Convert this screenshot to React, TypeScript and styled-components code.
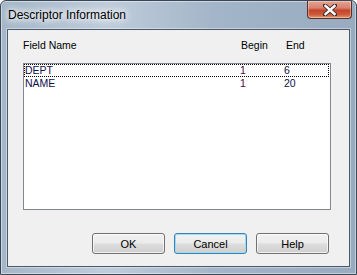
import React from 'react';
import styled, { createGlobalStyle } from 'styled-components';

const GlobalStyle = createGlobalStyle`
    html, body {
        margin: 0;
        padding: 0;
        background: #ffffff;
    }
    body {
        font-family: "Liberation Sans", Arial, sans-serif;
    }
`

const Window = styled.div`
    box-sizing: border-box;
    width: 357px;
    height: 275px;
    display: flex;
    flex-direction: column;
    border: 1px solid #3b4654;
    border-radius: 6px 6px 0 0;
    background: linear-gradient(90deg, #a4b6c8 0%, #bfcddb 30%, #a3b5c8 60%, #98abbf 100%);
    padding: 0 6px 7px 6px;
    box-shadow: inset 0 0 0 1px rgba(255,255,255,0.45);
`

const TitleBar = styled.div`
    height: 28px;
    display: flex;
    align-items: flex-start;
    flex-shrink: 0;
`

const TitleText = styled.div`
    margin-top: 7px;
    margin-left: 1px;
    font-size: 12px;
    color: #000000;
    text-shadow: 0 0 6px #ffffff, 0 0 8px #ffffff, 0 0 10px #ffffff;
`

const CloseButton = styled.div`
    margin-left: auto;
    margin-right: -2px;
    width: 45px;
    height: 18px;
    box-sizing: border-box;
    border: 1px solid #5a2e2a;
    border-top: none;
    border-radius: 0 0 4px 4px;
    background: linear-gradient(180deg, #e7a292 0%, #d7836f 40%, #c4452c 55%, #cf5a3b 80%, #e49a72 100%);
    box-shadow: inset 0 0 0 1px rgba(255,255,255,0.35);
    display: flex;
    align-items: center;
    justify-content: center;
`

const Client = styled.div`
    flex: 1;
    display: flex;
    flex-direction: column;
    border: 1px solid #4b5868;
    background: #f0f0f0;
    padding: 9px 0 0 15px;
    box-shadow: 0 0 0 1px rgba(255,255,255,0.4);
`

const HeaderRow = styled.div`
    display: flex;
    font-size: 10.5px;
    color: #000000;
    height: 13px;
    line-height: 13px;
`

const HeaderCell = styled.div<{ $w?: number }>`
    width: ${p => (p.$w ? `${p.$w}px` : 'auto')};
`

const ListBox = styled.div`
    margin-top: 11px;
    width: 308px;
    height: 147px;
    box-sizing: border-box;
    border: 1px solid #828790;
    background: #ffffff;
    padding: 0;
`

const Row = styled.div<{ $focused?: boolean }>`
    display: flex;
    height: 13px;
    line-height: 13px;
    font-size: 10.5px;
    padding-left: 1px;
    margin-right: 1px;
    outline: ${p => (p.$focused ? '1px dotted #000000' : 'none')};
    outline-offset: -1px;
`

const Cell = styled.div<{ $w?: number; $color: string }>`
    width: ${p => (p.$w ? `${p.$w}px` : 'auto')};
    color: ${p => p.$color};
`

const ButtonRow = styled.div`
    margin-top: auto;
    margin-bottom: 12px;
    margin-right: 20px;
    display: flex;
    justify-content: flex-end;
    gap: 9px;
`

const Button = styled.div<{ $default?: boolean }>`
    width: 73px;
    height: 21px;
    box-sizing: border-box;
    border: 1px solid ${p => (p.$default ? '#3c7fb1' : '#707070')};
    border-radius: 3px;
    background: linear-gradient(180deg, #f2f2f2 0%, #ebebeb 48%, #dddddd 52%, #cfcfcf 100%);
    box-shadow: inset 0 0 0 1px ${p => (p.$default ? '#9fdcf5' : 'rgba(255,255,255,0.7)')};
    font-size: 11px;
    color: #000000;
    display: flex;
    align-items: center;
    justify-content: center;
`

const fields = [
    { name: 'DEPT', begin: '1', end: '6' },
    { name: 'NAME', begin: '1', end: '20' },
]

const App = () => {
    return (
        <>
            <GlobalStyle />
            <Window>
                <TitleBar>
                    <TitleText>Descriptor Information</TitleText>
                    <CloseButton>
                        <svg width="14" height="12" viewBox="0 0 14 12">
                            <path d="M2 1.5 L12 10.5 M12 1.5 L2 10.5" stroke="#3a2a2a" strokeWidth="4.2" strokeLinecap="square" />
                            <path d="M2.5 2 L11.5 10 M11.5 2 L2.5 10" stroke="#ffffff" strokeWidth="2.4" strokeLinecap="square" />
                        </svg>
                    </CloseButton>
                </TitleBar>
                <Client>
                    <HeaderRow>
                        <HeaderCell $w={218}>Field Name</HeaderCell>
                        <HeaderCell $w={45}>Begin</HeaderCell>
                        <HeaderCell>End</HeaderCell>
                    </HeaderRow>
                    <ListBox>
                        {fields.map((f, i) => (
                            <Row key={f.name} $focused={i === 0}>
                                <Cell $w={215} $color="#10104a">{f.name}</Cell>
                                <Cell $w={44} $color="#4a0838">{f.begin}</Cell>
                                <Cell $color="#10104a">{f.end}</Cell>
                            </Row>
                        ))}
                    </ListBox>
                    <ButtonRow>
                        <Button>OK</Button>
                        <Button $default>Cancel</Button>
                        <Button>Help</Button>
                    </ButtonRow>
                </Client>
            </Window>
        </>
    )
}

export default App
